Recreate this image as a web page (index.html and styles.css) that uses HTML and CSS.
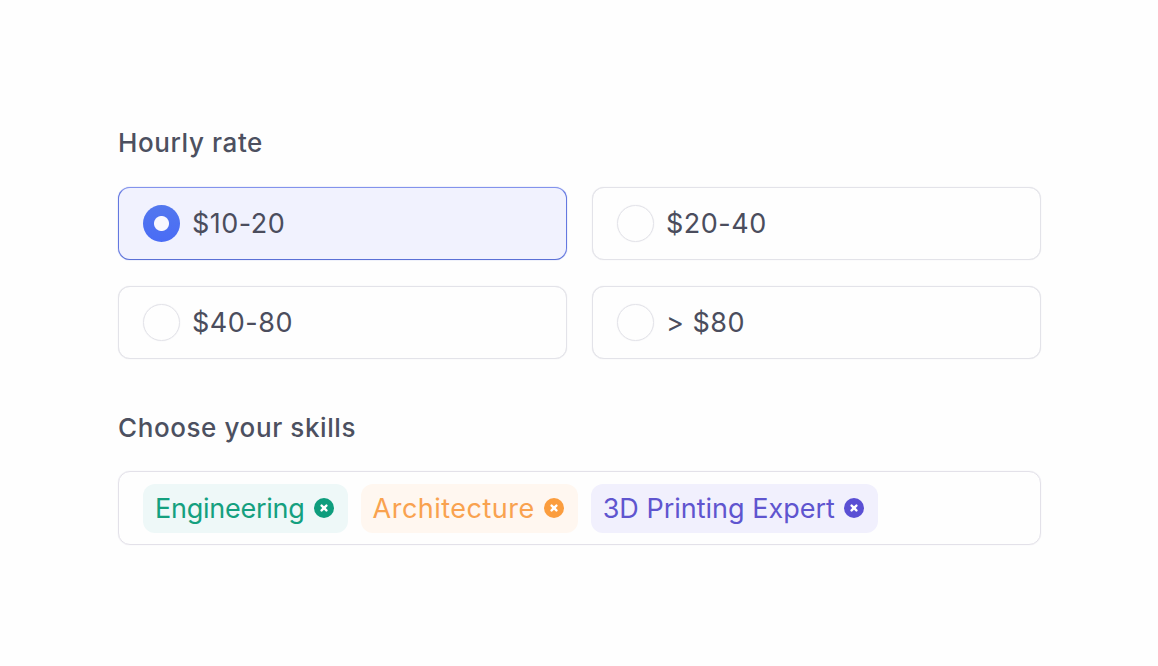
FILE: index.html
```html
<!DOCTYPE html>
<html lang="en">
<head>
<meta charset="utf-8">
<title>Hourly rate</title>
<link rel="stylesheet" href="styles.css">
</head>
<body>
<main class="form">
  <h2 class="label">Hourly rate</h2>
  <div class="rates">
    <div class="rate selected"><span class="radio"></span><span class="rate-text">$10-20</span></div>
    <div class="rate"><span class="radio"></span><span class="rate-text">$20-40</span></div>
    <div class="rate"><span class="radio"></span><span class="rate-text">$40-80</span></div>
    <div class="rate"><span class="radio"></span><span class="rate-text">&gt; $80</span></div>
  </div>
  <h2 class="label skills-label">Choose your skills</h2>
  <div class="skills">
    <div class="tag green"><span class="tag-text">Engineering</span><svg class="x" viewBox="0 0 20 20"><circle class="x-bg" cx="10" cy="10" r="10"/><path class="x-mark" d="M7.6 7.6l4.8 4.8M12.4 7.6l-4.8 4.8"/></svg></div>
    <div class="tag orange"><span class="tag-text">Architecture</span><svg class="x" viewBox="0 0 20 20"><circle class="x-bg" cx="10" cy="10" r="10"/><path class="x-mark" d="M7.6 7.6l4.8 4.8M12.4 7.6l-4.8 4.8"/></svg></div>
    <div class="tag purple"><span class="tag-text">3D Printing Expert</span><svg class="x" viewBox="0 0 20 20"><circle class="x-bg" cx="10" cy="10" r="10"/><path class="x-mark" d="M7.6 7.6l4.8 4.8M12.4 7.6l-4.8 4.8"/></svg></div>
  </div>
</main>
</body>
</html>
```
FILE: styles.css
```css
* { box-sizing: border-box; }
html, body { margin: 0; height: 100%; }
body {
  background: #fefefe;
  font-family: "Inter", "Lato", sans-serif;
  color: #4a4d5e;
  overflow: hidden;
}
.form {
  width: 923px;
  margin-left: 118px;
  padding-top: 125px;
}
.label {
  margin: 0;
  height: 36px;
  line-height: 36px;
  font-size: 26px;
  font-weight: 500;
  letter-spacing: 0.6px;
  color: #4c5060;
}
.rates {
  margin-top: 26px;
  display: grid;
  grid-template-columns: 449px 449px;
  column-gap: 25px;
  row-gap: 26px;
}
.rate {
  height: 73px;
  display: flex;
  align-items: center;
  gap: 12px;
  padding-left: 24px;
  border: 1px solid #e3e3e9;
  box-shadow: 0 0 1px #dcdce3;
  border-radius: 12px;
  background: #fefefe;
}
.rate.selected {
  background: #f1f2fe;
  border-color: #8393ec #6478e0 #5a70d6;
  box-shadow: 0 0 1px #7284e2;
}
.radio {
  width: 37px;
  height: 37px;
  border-radius: 50%;
  border: 1px solid #e3e3e9;
  box-shadow: 0 0 1px #dcdce3;
  flex: none;
}
.selected .radio {
  border: none;
  box-shadow: none;
  background:
    radial-gradient(circle, #f8f8ff 0 7px, transparent 8px),
    linear-gradient(#5277ee, #4a6cf5);
}
.rate-text {
  font-size: 27px;
  letter-spacing: 0.5px;
  color: #4b4d5d;
}
.skills-label { margin-top: 51px; }
.skills {
  margin-top: 25px;
  height: 74px;
  display: flex;
  align-items: center;
  gap: 13px;
  padding-left: 24px;
  border: 1px solid #e3e1e9;
  box-shadow: 0 0 1px #dcdae3;
  border-radius: 12px;
}
.tag {
  height: 49px;
  display: flex;
  align-items: center;
  gap: 9px;
  padding: 0 14px 0 12px;
  border-radius: 12px;
}
.tag-text { font-size: 27px; }
.x { width: 20px; height: 20px; flex: none; }
.x-mark { stroke: #fff; stroke-width: 2.4; stroke-linecap: round; fill: none; }
.green { background: #eef8f8; color: #14a07f; }
.green .tag-text { letter-spacing: -0.25px; }
.green .x-bg { fill: #0e9d7d; }
.orange { background: #fff7f0; color: #f9a24f; }
.orange .tag-text { letter-spacing: 0.48px; }
.orange .x-bg { fill: #fb9d3e; }
.purple { background: #f1f0fd; color: #5f55cf; }
.purple .tag-text { letter-spacing: 0; }
.purple .x-bg { fill: #5a4fd4; }
```
